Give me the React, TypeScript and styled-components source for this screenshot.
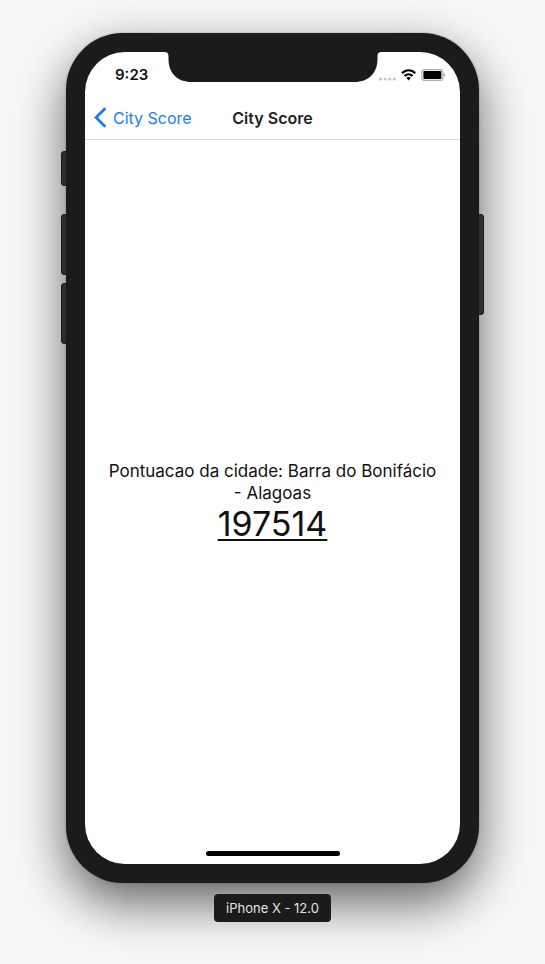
import React from "react";
import styled, { createGlobalStyle } from "styled-components";

const GlobalStyle = createGlobalStyle`
  *, *::before, *::after { box-sizing: border-box; }
  body {
    margin: 0;
    background: #f7f7f7;
    font-family: Inter, "Liberation Sans", sans-serif;
    color: #111;
  }
`;

const Stage = styled.main`
  display: flex;
  flex-direction: column;
  align-items: center;
  gap: 11px;
  min-height: 100vh;
  padding: 33px 66px 42px;
`;

const Phone = styled.div`
  position: relative;
  display: flex;
  width: 100%;
  max-width: 480px;
  aspect-ratio: 413 / 850;
  padding: 19px;
  border-radius: 57px;
  background: #1b1b1b;
  box-shadow: 0 20px 50px rgba(0, 0, 0, 0.6), 0 0 2px rgba(0, 0, 0, 0.3);
`;

const SideButton = styled.span<{ $side: "left" | "right"; $top: number; $length: number }>`
  position: absolute;
  top: ${(p) => p.$top}px;
  ${(p) => p.$side}: -5px;
  width: 6px;
  height: ${(p) => p.$length}px;
  border: 1px solid #1b1b1b;
  border-radius: ${(p) => (p.$side === "left" ? "3px 0 0 3px" : "0 3px 3px 0")};
  background: #2d2d2d;
`;

const Screen = styled.div`
  position: relative;
  display: flex;
  flex: 1;
  flex-direction: column;
  overflow: hidden;
  border-radius: 40px;
  background: #fff;
`;

const Notch = styled.svg`
  position: absolute;
  top: 0;
  left: 50%;
  transform: translateX(-50%);
`;

const StatusBar = styled.div`
  display: flex;
  align-items: center;
  justify-content: space-between;
  height: 44px;
  padding: 2px 14px 0 30px;
`;

const Clock = styled.time`
  font-size: 15px;
  line-height: 20px;
  font-weight: 600;
`;

const StatusIcons = styled.svg`
  display: block;
`;

const NavBar = styled.header`
  display: grid;
  grid-template-columns: 1fr auto 1fr;
  align-items: center;
  height: 44px;
  padding: 0 9px;
  border-bottom: 1px solid #dcdcdc;
`;

const BackButton = styled.button`
  display: flex;
  align-items: center;
  justify-self: start;
  gap: 6px;
  padding: 0;
  border: 0;
  background: none;
  color: #1a80f5;
  font: inherit;
  font-size: 16px;
  line-height: 22px;
  white-space: nowrap;
  cursor: pointer;
`;

const Title = styled.h1`
  margin: 0;
  color: #222;
  font-size: 16px;
  line-height: 22px;
  font-weight: 600;
`;

const Content = styled.section`
  display: flex;
  flex: 1;
  flex-direction: column;
  align-items: center;
  justify-content: center;
  padding: 0 20px;
  text-align: center;
`;

const CityLabel = styled.p`
  margin: 0;
  font-size: 17px;
  line-height: 22px;
`;

const Score = styled.p`
  margin: 0;
  font-size: 34px;
  line-height: 40px;
  text-decoration: underline;
  text-decoration-thickness: 2px;
  text-underline-offset: 3px;
  text-decoration-skip-ink: none;
`;

const HomeIndicator = styled.div`
  position: absolute;
  bottom: 8px;
  left: 50%;
  width: 134px;
  height: 5px;
  border-radius: 3px;
  background: #000;
  transform: translateX(-50%);
`;

const DeviceLabel = styled.div`
  position: relative;
  padding: 6px 12px;
  border-radius: 4px;
  background: #1b1b1b;
  color: #e4e4e4;
  box-shadow: 0 0 1px rgba(255, 255, 255, 0.6);
  font-size: 13px;
  line-height: 16px;
  white-space: nowrap;
`;

export default function App() {
  return (
    <>
      <GlobalStyle />
      <Stage>
        <Phone>
          <SideButton $side="left" $top={118} $length={35} />
          <SideButton $side="left" $top={181} $length={61} />
          <SideButton $side="left" $top={250} $length={61} />
          <SideButton $side="right" $top={181} $length={101} />
          <Screen>
            <Notch width="219" height="30" viewBox="0 0 219 30" aria-hidden="true">
              <path
                d="M0 0C4 0 5 1 5 5V7C5 21 14 30 28 30H191C205 30 214 21 214 7V5C214 1 215 0 219 0Z"
                fill="#1b1b1b"
              />
            </Notch>
            <StatusBar>
              <Clock>9:23</Clock>
              <StatusIcons width="68" height="14" viewBox="0 0 68 14" aria-hidden="true">
                <g fill="#c4c4c4">
                  <circle cx="2.6" cy="11" r="1.6" />
                  <circle cx="7.2" cy="11" r="1.6" />
                  <circle cx="11.8" cy="11" r="1.6" />
                  <circle cx="16.4" cy="11" r="1.6" />
                </g>
                <g fill="none" stroke="#000" strokeWidth="2.1">
                  <path d="M24 5.2C27.8 1.2 33.4 1.2 37.2 5.2" />
                  <path d="M26.6 8.1C29 5.6 32.2 5.6 34.6 8.1" />
                </g>
                <path d="M28.3 9.8C29.6 8.6 31.6 8.6 32.9 9.8L30.6 12.4Z" fill="#000" />
                <rect x="43.8" y="1.7" width="21.2" height="10.6" rx="2.8" fill="none" stroke="#adadad" strokeWidth="1.2" />
                <rect x="45.4" y="3.1" width="18" height="7.8" rx="1" fill="#000" />
                <path d="M66 5C67.6 5.6 67.6 8.4 66 9Z" fill="#adadad" />
              </StatusIcons>
            </StatusBar>
            <NavBar>
              <BackButton type="button">
                <svg width="13" height="21" viewBox="0 0 13 21" aria-hidden="true">
                  <path d="M11.3 1.3L2.1 10.5L11.3 19.7" fill="none" stroke="currentColor" strokeWidth="2.9" />
                </svg>
                City Score
              </BackButton>
              <Title>City Score</Title>
            </NavBar>
            <Content>
              <CityLabel>Pontuacao da cidade: Barra do Bonifácio - Alagoas</CityLabel>
              <Score>197514</Score>
            </Content>
            <HomeIndicator />
          </Screen>
        </Phone>
        <DeviceLabel>iPhone X - 12.0</DeviceLabel>
      </Stage>
    </>
  );
}
